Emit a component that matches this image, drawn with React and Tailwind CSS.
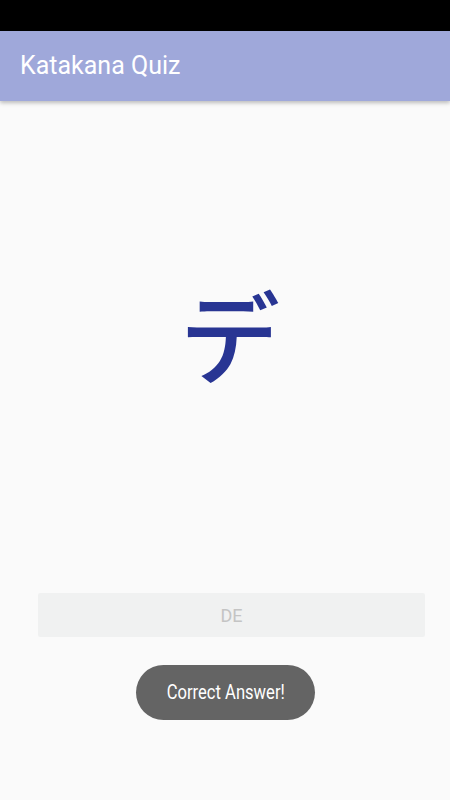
export default function App() {
  return (
    <div className="w-[450px] h-[800px] bg-[#fafafa] flex flex-col overflow-hidden" style={{ fontFamily: 'Roboto, "Noto Sans", sans-serif' }}>
      {/* status bar */}
      <div className="h-[31px] bg-black shrink-0"></div>

      {/* toolbar */}
      <div className="h-[70px] bg-[#9fa8da] shrink-0 flex items-center px-5 shadow-[0_2px_4px_rgba(0,0,0,0.25)] relative z-10">
        <h1 className="text-white text-[25px] font-normal">Katakana Quiz</h1>
      </div>

      {/* character */}
      <div className="h-[492px] flex items-center justify-center shrink-0 pb-[28px] pl-[10px]">
        <span
          className="text-[#283593] text-[100px] leading-none font-medium"
          style={{ fontFamily: '"Noto Sans CJK JP", sans-serif' }}
        >
          デ
        </span>
      </div>

      {/* answer field */}
      <div className="ml-[38px] mr-[25px] h-[44px] bg-[#f0f1f1] rounded-[2px] flex items-center justify-center shrink-0">
        <span className="text-[#c4c4c4] text-[18px]">DE</span>
      </div>

      {/* toast */}
      <div className="flex justify-center mt-[28px] pl-[1px]">
        <div className="w-[179px] h-[55px] rounded-full bg-[#646464] flex items-center justify-center">
          <span className="text-white text-[21px] inline-block scale-x-[0.79]">Correct Answer!</span>
        </div>
      </div>
    </div>
  );
}
